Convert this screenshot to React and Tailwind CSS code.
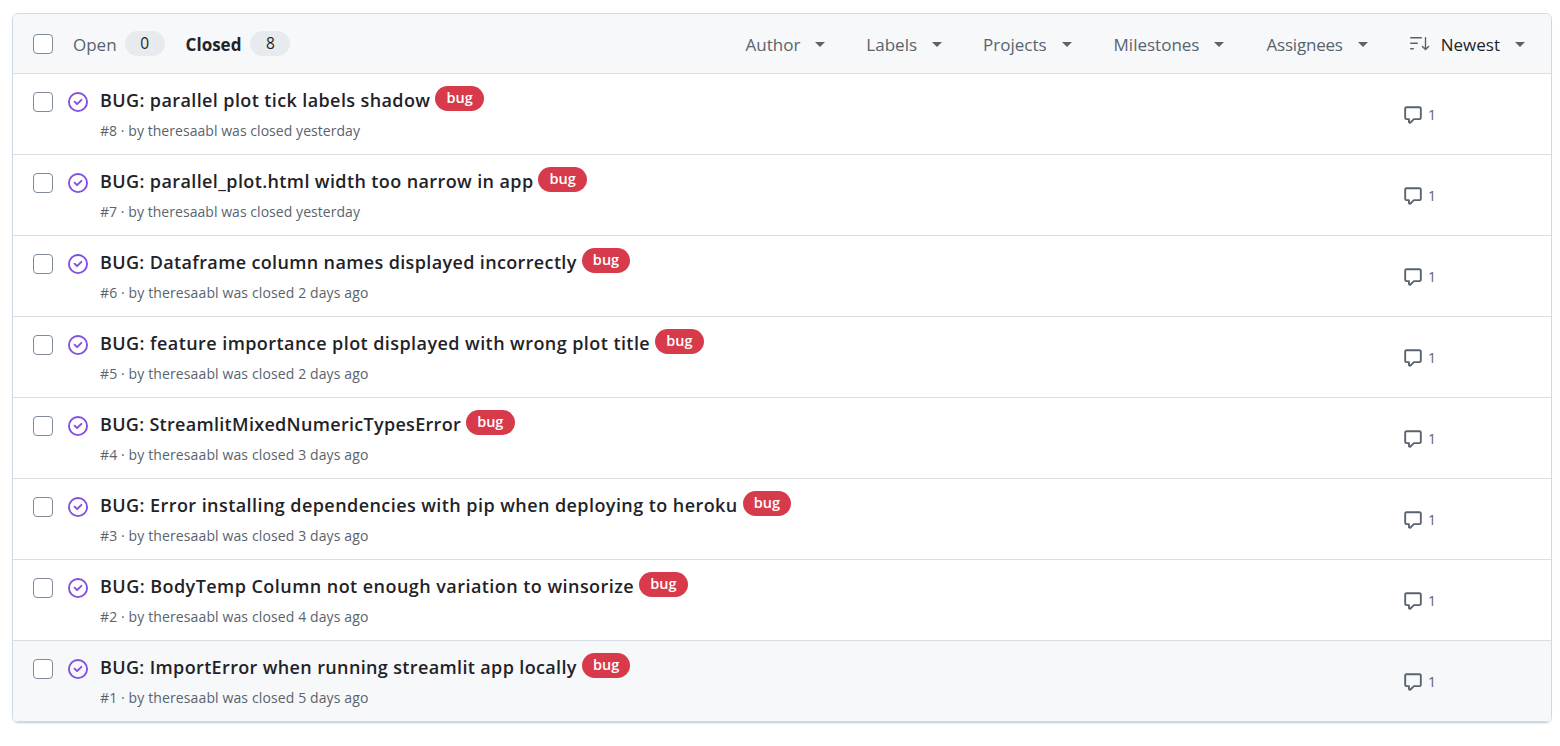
const issues = [
  ["BUG: parallel plot tick labels shadow", 8, "yesterday", "tracking-[0.39px]", "tracking-[0.05px]"],
  ["BUG: parallel_plot.html width too narrow in app", 7, "yesterday", "tracking-[0.39px]", "tracking-[0.05px]"],
  ["BUG: Dataframe column names displayed incorrectly", 6, "2 days ago", "tracking-[0.36px]", "tracking-[0.12px]"],
  ["BUG: feature importance plot displayed with wrong plot title", 5, "2 days ago", "tracking-[0.43px]", "tracking-[0.12px]"],
  ["BUG: StreamlitMixedNumericTypesError", 4, "3 days ago", "tracking-[0.3px]", "tracking-[0.12px]"],
  ["BUG: Error installing dependencies with pip when deploying to heroku", 3, "3 days ago", "tracking-[0.43px]", "tracking-[0.12px]"],
  ["BUG: BodyTemp Column not enough variation to winsorize", 2, "4 days ago", "tracking-[0.45px]", "tracking-[0.12px]"],
  ["BUG: ImportError when running streamlit app locally", 1, "5 days ago", "tracking-[0.36px]", "tracking-[0.12px]"],
];

const Check = () => (
  <span className="block w-5 h-5 shrink-0 rounded-[4px] border border-[#818b98] bg-white" />
);

const ClosedIcon = () => (
  <svg viewBox="0 0 16 16" className="w-5 h-5 shrink-0 fill-[#8250df]">
    <path d="M11.28 6.78a.75.75 0 0 0-1.06-1.06L7.25 8.69 5.78 7.22a.75.75 0 0 0-1.06 1.06l2 2a.75.75 0 0 0 1.06 0l3.5-3.5Z" />
    <path d="M16 8A8 8 0 1 1 0 8a8 8 0 0 1 16 0Zm-1.5 0a6.5 6.5 0 1 0-13 0 6.5 6.5 0 0 0 13 0Z" />
  </svg>
);

const CommentIcon = () => (
  <svg viewBox="0 0 16 16" className="w-[20px] h-[20px] shrink-0 fill-[#59636e]">
    <path d="M1 2.75C1 1.784 1.784 1 2.75 1h10.5c.966 0 1.75.784 1.75 1.75v7.5A1.75 1.75 0 0 1 13.25 12H9.06l-2.573 2.573A1.458 1.458 0 0 1 4 13.543V12H2.75A1.75 1.75 0 0 1 1 10.25Zm1.75-.25a.25.25 0 0 0-.25.25v7.5c0 .138.112.25.25.25h2a.75.75 0 0 1 .75.75v2.19l2.72-2.72a.749.749 0 0 1 .53-.22h4.5a.25.25 0 0 0 .25-.25v-7.5a.25.25 0 0 0-.25-.25Z" />
  </svg>
);

const SortIcon = () => (
  <svg viewBox="0 0 20 20" className="w-5 h-5 shrink-0 fill-[#59636e]">
    <rect x="0" y="3" width="12" height="1.4" rx="0.7" />
    <rect x="0" y="8.5" width="8" height="1.4" rx="0.7" />
    <rect x="0" y="14" width="4" height="1.4" rx="0.7" />
    <path d="M15.5 3a.7.7 0 0 1 .7.7v10.1l1.9-1.9a.7.7 0 1 1 1 1l-3.1 3.1a.7.7 0 0 1-1 0l-3.1-3.1a.7.7 0 1 1 1-1l1.9 1.9V3.7a.7.7 0 0 1 .7-.7Z" />
  </svg>
);

const Caret = () => (
  <span className="ml-[15px] translate-y-px w-0 h-0 border-x-[5px] border-x-transparent border-t-[5px] border-t-[#59636e]" />
);

const Filter = ({ label, className = "" }) => (
  <div className={"flex items-center text-[#59636e] text-[17px] font-medium " + className}>
    <span className="translate-y-px">{label}</span>
    <Caret />
  </div>
);

const Pill = ({ n }) => (
  <span className="flex items-center justify-center w-10 h-[25px] rounded-full bg-[#e8ebee] text-[#1f2328] text-[15.5px] font-medium">{n}</span>
);

function Row({ title, num, when, tt, mt, last }) {
  return (
    <div className={"flex h-[81px] border-b pl-5 " + (last ? "bg-[#f6f8fa] border-[#d1d9e0]" : "bg-white border-[#d8dee4]")}>
      <div className="pt-[18px]"><Check /></div>
      <div className="pt-[18px] ml-[15px]"><ClosedIcon /></div>
      <div className="ml-3 flex-1 min-w-0 pt-[12px]">
        <div className="flex items-center h-[27px]">
          <span className={"text-[18px] font-semibold text-[#1f2328] leading-[27px] translate-y-px " + tt}>{title}</span>
          <span className="ml-[5px] -mt-[3px] flex items-center justify-center h-[25px] w-[48.5px] rounded-full bg-[#d73a4a] text-white text-[14.5px] font-semibold">bug</span>
        </div>
        <div className={"mt-[7px] text-[14px] text-[#59636e] leading-[21px] " + mt}>#{num} · by theresaabl was closed {when}</div>
      </div>
      <div className="w-[148px] shrink-0 flex items-center gap-[5px] pt-[1px]">
        <CommentIcon />
        <span className="text-[14px] text-[#59636e]">1</span>
      </div>
    </div>
  );
}

export default function App() {
  return (
    <div className="h-[746px] bg-white pt-[13px] pl-3 pr-2 font-['Open_Sans','Noto_Sans',sans-serif]">
      <div className="rounded-[6px] border border-[#d1d9e0] overflow-hidden shadow-[0_1px_1px_rgba(31,35,40,0.08)]">
        <div className="flex items-center h-[60px] bg-[#f6f8fa] border-b border-[#d8dee4] pl-5 pr-[26px]">
          <Check />
          <span className="ml-5 text-[17px] text-[#59636e] translate-y-px">Open</span>
          <span className="ml-[8px]"><Pill n={0} /></span>
          <span className="ml-[21px] text-[17px] font-bold text-[#1f2328] translate-y-px">Closed</span>
          <span className="ml-[9px]"><Pill n={8} /></span>
          <div className="ml-auto flex items-center gap-[42px]">
            <Filter label="Author" className="-mr-px" />
            <Filter label="Labels" className="-mr-px" />
            <Filter label="Projects" />
            <Filter label="Milestones" />
            <Filter label="Assignees" className="tracking-[-0.2px]" />
            <div className="flex items-center text-[17px] font-medium text-[#1f2328]">
              <SortIcon />
              <span className="ml-[11px] translate-y-px">Newest</span>
              <Caret />
            </div>
          </div>
        </div>
        {issues.map(([t, n, w, tt, mt], i) => (
          <Row key={n} title={t} num={n} when={w} tt={tt} mt={mt} last={i === issues.length - 1} />
        ))}
      </div>
    </div>
  );
}
